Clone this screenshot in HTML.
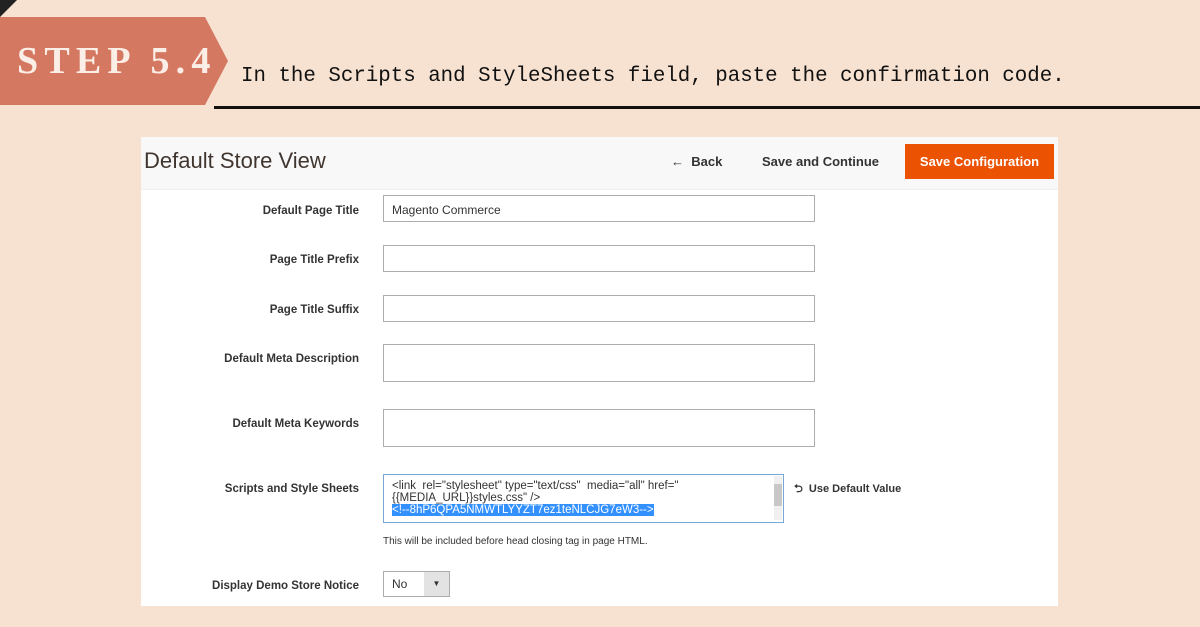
<!DOCTYPE html>
<html><head><style>
*{margin:0;padding:0;box-sizing:border-box}
body{width:1200px;height:627px;background:#f7e2d1;position:relative;overflow:hidden;font-family:"Liberation Sans",sans-serif}
.a{position:absolute}
.lbl{position:absolute;right:841px;font-size:11.5px;color:#333;font-weight:bold;text-align:right;white-space:nowrap;margin-top:2px}
.inp{position:absolute;left:383px;width:432px;background:#fff;border:1px solid #adadad}
</style></head><body>
<svg class="a" style="left:0;top:0" width="240" height="110"><polygon points="0,0 17,0 0,17" fill="#222"/><polygon points="0,17 205,17 228,61 205,105 0,105" fill="#d57862"/></svg>
<div class="a" style="left:17px;top:39px;font-family:'Liberation Serif',serif;font-weight:bold;font-size:38px;letter-spacing:6.2px;color:#fbeee6">STEP 5.4</div>
<div class="a" style="left:241px;top:65px;font-family:'Liberation Mono',monospace;font-size:20.8px;color:#111">In the Scripts and StyleSheets field, paste the confirmation code.</div>
<div class="a" style="left:214px;top:106px;width:986px;height:3px;background:#111"></div>

<div class="a" style="left:141px;top:137px;width:917px;height:469px;background:#fff"></div>
<div class="a" style="left:141px;top:137px;width:917px;height:53px;background:#f8f8f8;border-bottom:1px solid #eee"></div>
<div class="a" style="left:144px;top:148px;font-size:22px;color:#41362f">Default Store View</div>
<div class="a" style="left:671px;top:154px;font-size:13px;color:#333;font-weight:bold">←&nbsp; Back</div>
<div class="a" style="left:762px;top:154px;font-size:13px;color:#333;font-weight:bold">Save and Continue</div>
<div class="a" style="left:905px;top:144px;width:149px;height:35px;background:#eb5202;color:#fff;font-size:13px;font-weight:bold;text-align:center;line-height:35px">Save Configuration</div>

<div class="lbl" style="top:203px">Default Page Title</div>
<div class="inp" style="top:195px;height:27px;font-size:12px;color:#333;padding:7px 8px">Magento Commerce</div>
<div class="lbl" style="top:252px">Page Title Prefix</div>
<div class="inp" style="top:245px;height:27px"></div>
<div class="lbl" style="top:302px">Page Title Suffix</div>
<div class="inp" style="top:295px;height:27px"></div>
<div class="lbl" style="top:351px">Default Meta Description</div>
<div class="inp" style="top:344px;height:38px"></div>
<div class="lbl" style="top:416px">Default Meta Keywords</div>
<div class="inp" style="top:409px;height:38px"></div>
<div class="lbl" style="top:481px">Scripts and Style Sheets</div>
<div class="a" style="left:383px;top:474px;width:401px;height:49px;background:#fff;border:1px solid #7aa7d6;font-size:11.5px;color:#333;padding:5px 8px;line-height:12px">&lt;link &nbsp;rel="stylesheet" type="text/css" &nbsp;media="all" href="<br>{{MEDIA_URL}}styles.css" /&gt;<br><span style="background:#3390ff;color:#fff">&lt;!--8hP6QPA5NMWTLYYZT7ez1teNLCJG7eW3--&gt;</span></div>
<div class="a" style="left:774px;top:476px;width:8px;height:44px;background:#f0f0f0"><div style="margin-top:8px;height:22px;background:#c8c8c8"></div></div>
<div class="a" style="left:794px;top:480px;font-size:11px;color:#333;font-weight:bold">⮌&nbsp; Use Default Value</div>
<div class="a" style="left:383px;top:536px;font-size:10px;color:#333">This will be included before head closing tag in page HTML.</div>
<div class="lbl" style="top:578px">Display Demo Store Notice</div>
<div class="a" style="left:383px;top:571px;width:67px;height:26px;border:1px solid #adadad;background:#fff;font-size:12px;color:#333;padding:5px 8px">No</div>
<div class="a" style="left:424px;top:572px;width:25px;height:24px;background:#e3e3e3;font-size:8px;text-align:center;line-height:24px;color:#333">▼</div>
</body></html>
